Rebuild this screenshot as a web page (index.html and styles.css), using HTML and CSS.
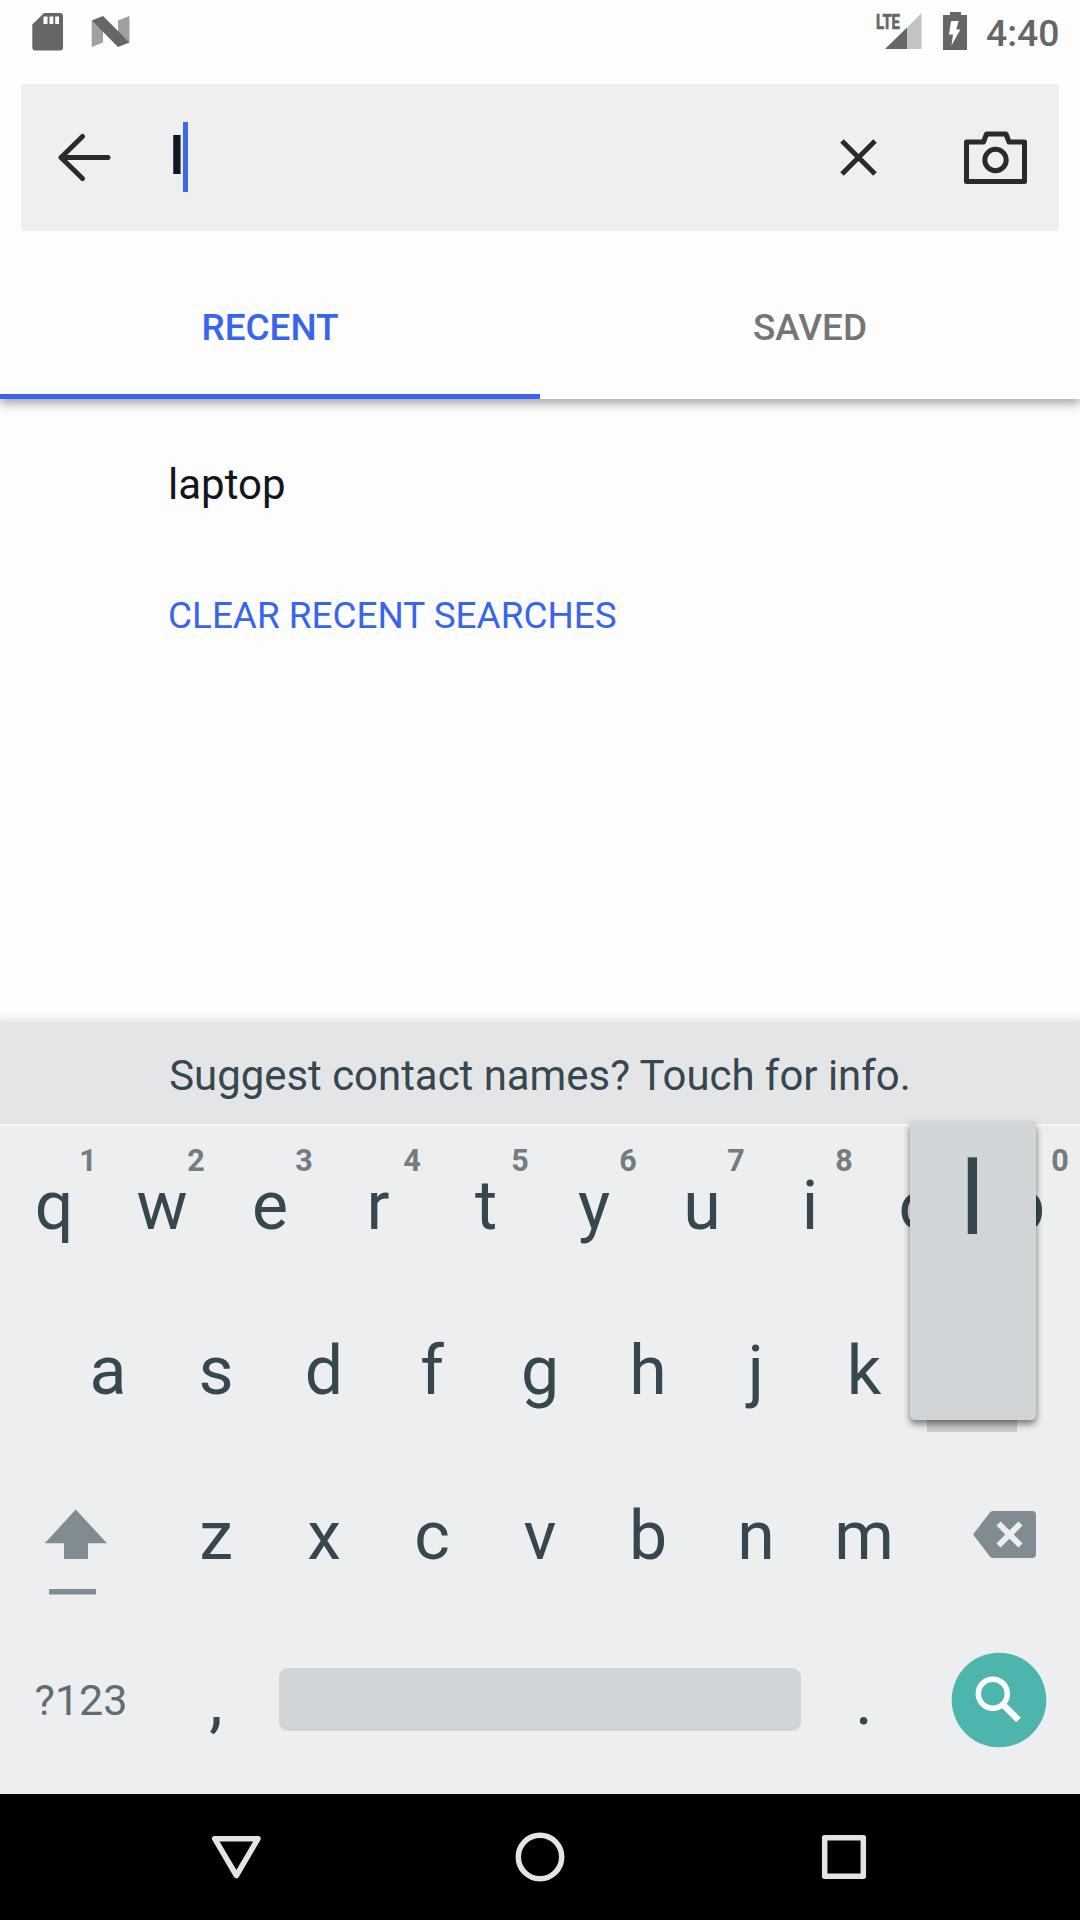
FILE: index.html
```html
<!DOCTYPE html>
<html lang="en">
<head>
<meta charset="utf-8">
<title>Search</title>
<link rel="stylesheet" href="styles.css">
</head>
<body>
<div class="screen">
  <header class="status">
    <svg class="status-left" viewBox="0 0 150 60" width="150" height="60">
      <path fill="#666" d="M44 13H60a3 3 0 0 1 3 3V47.500a3 3 0 0 1-3 3H35.300a3 3 0 0 1-3-3V24.500Z"/>
      <path fill="#fff" d="M43.500 16.500h4v7.500h-4zM49.500 16.500h3.800v7.500h-3.800zM55.200 16.500h3.800v7.500h-3.800z"/>
      <path fill="#a0a0a0" d="M91.700 20.500 103 31V42.500L91.700 47ZM118 20.500 129.500 16V42.500L118 32Z"/>
      <path fill="#666" d="M91.700 20.500 103 16 129.500 42.500 118 47Z"/>
    </svg>
    <svg class="status-right" viewBox="860 0 120 60" width="120" height="60">
      <text class="lte" x="876" y="29" textLength="24" lengthAdjust="spacingAndGlyphs">LTE</text>
      <path fill="#c3c3c3" d="M907 27.500 921.500 13V49H907Z"/>
      <path fill="#666" d="M885 49 907 27.500V49Z"/>
      <path fill="#666" d="M950 12h11v3h6v35h-24V15h7z"/>
      <path fill="#fff" d="M951 21h7.500l-2.200 8.500h4L951.500 45.500l1.500-11h-4z"/>
    </svg>
    <span class="clock">4:40</span>
  </header>

  <div class="searchbar">
    <svg viewBox="21 84 150 147" width="150" height="147" fill="none" stroke="#2a2a2a" stroke-width="5" stroke-linecap="round" stroke-linejoin="round">
      <path d="M108 157.500H61M82.500 136.500 61 157.500 82.500 178.500"/>
    </svg>
    <span class="query">l</span><span class="caret"></span>
    <svg class="search-actions" viewBox="820 84 239 147" width="239" height="147" fill="none" stroke="#2a2a2a" stroke-width="5">
      <path d="M842 141 875 174M875 141 842 174"/>
      <path stroke-linejoin="round" d="M966.500 142H983.500L986.500 134H1006L1009 142H1024.500V181.500H966.500Z"/>
      <circle cx="995.500" cy="160" r="10.700"/>
    </svg>
  </div>

  <nav class="tabs">
    <span class="tab active">RECENT</span>
    <span class="tab">SAVED</span>
  </nav>

  <main class="results">
    <div class="recent">laptop</div>
    <div class="clear">CLEAR RECENT SEARCHES</div>
  </main>

  <section class="keyboard">
    <div class="suggest">Suggest contact names? Touch for info.</div>
    <div class="row">
      <span class="key">q<b class="hint">1</b></span>
      <span class="key">w<b class="hint">2</b></span>
      <span class="key">e<b class="hint">3</b></span>
      <span class="key">r<b class="hint">4</b></span>
      <span class="key">t<b class="hint">5</b></span>
      <span class="key">y<b class="hint">6</b></span>
      <span class="key">u<b class="hint">7</b></span>
      <span class="key">i<b class="hint">8</b></span>
      <span class="key">o</span>
      <span class="key">p<b class="hint">0</b></span>
    </div>
    <div class="row">
      <span class="key">a</span><span class="key">s</span><span class="key">d</span><span class="key">f</span><span class="key">g</span><span class="key">h</span><span class="key">j</span><span class="key">k</span>
      <span class="key pressed"><span class="popup">l</span></span>
    </div>
    <div class="row">
      <svg viewBox="0 1456 162 165" width="162" height="165" fill="#808c91">
        <path d="M75.700 1509.500 107 1543.300H88V1559H64V1543.300H44.800Z"/>
        <path d="M49 1589h47v5.500H49z"/>
      </svg>
      <span class="key">z</span><span class="key">x</span><span class="key">c</span><span class="key">v</span><span class="key">b</span><span class="key">n</span><span class="key">m</span>
      <svg viewBox="918 1456 162 165" width="162" height="165">
        <path fill="#808c91" d="M993 1511h39a4 4 0 0 1 4 4v39a4 4 0 0 1-4 4h-39q-2 0-3.500-2L973 1534.500 989.500 1513q1.500-2 3.500-2z"/>
        <path fill="none" stroke="#eceeef" stroke-width="6" d="M998.500 1523.500 1020.500 1545.500M1020.500 1523.500 998.500 1545.500"/>
      </svg>
    </div>
    <div class="row">
      <span class="key symbols">?123</span>
      <span class="key">,</span>
      <span class="space"></span>
      <span class="key">.</span>
      <svg viewBox="918 1621 162 165" width="162" height="165">
        <circle cx="999" cy="1700" r="47.300" fill="#4db5ac"/>
        <circle cx="992.800" cy="1693.700" r="14.500" fill="none" stroke="#fff" stroke-width="5.500"/>
        <path fill="none" stroke="#fff" stroke-width="6.500" d="M1003 1704.500 1018.500 1720"/>
      </svg>
    </div>
  </section>

  <footer class="navbar">
    <svg viewBox="0 1794 1080 126" width="1080" height="126" fill="none" stroke="#e4e4e4" stroke-width="5.500" stroke-linejoin="round">
      <path d="M214.700 1838.700H258L236.400 1875.500Z"/>
      <circle cx="540" cy="1857" r="21.700"/>
      <path d="M824.700 1837.700H863.300V1876.300H824.700Z"/>
    </svg>
  </footer>
</div>
</body>
</html>
```
FILE: styles.css
```css
* { box-sizing: border-box; }
body { margin: 0; background: #fdfdfd; font-family: Roboto, "Noto Sans", sans-serif; }
svg { display: block; flex: none; }
.screen { width: 1080px; height: 1920px; display: flex; flex-direction: column; overflow: hidden; background: #fdfdfd; }

.status { height: 84px; display: flex; align-items: flex-start; }
.status-right { margin-left: auto; }
.lte { font: 700 21px Roboto, sans-serif; fill: #666; stroke: #666; stroke-width: .7px; }
.clock { width: 100px; padding-left: 6px; font-size: 37.300px; font-weight: 500; line-height: 67px; color: #666; }

.searchbar { height: 147px; margin: 0 21px; display: flex; background: #efefef; border-radius: 4px; }
.query { width: 12px; font-size: 52px; font-weight: 700; line-height: 146px; color: #101622; text-indent: -1px; }
.caret { width: 5px; height: 70px; margin-top: 38px; background: #3f68e8; }
.search-actions { margin-left: auto; }

.tabs { height: 168px; display: flex; box-shadow: 0 5px 9px rgba(0,0,0,.32); clip-path: inset(0 0 -20px 0); }
.tab { flex: 1; height: 168px; padding-top: 31px; text-align: center; font-size: 36.900px; font-weight: 500; line-height: 131px; color: #757575; }
.tab.active { color: #3864ee; border-bottom: 5px solid #3864ee; }

.results { flex: 1; padding: 35px 0 0 168px; }
.recent { height: 131px; font-size: 42px; line-height: 101px; color: #10151f; }
.clear { font-size: 36.900px; line-height: 101px; color: #3864ee; }

.keyboard { height: 772px; background: #eceeef; box-shadow: 0 -2px 8px 3px rgba(0,0,0,.08); }
.suggest { height: 104px; background: #e4e5e7; border-bottom: 2px solid #f6f7f8; text-align: center; font-size: 41.900px; line-height: 107px; color: #37474f; }
.row { height: 165px; display: flex; justify-content: center; }
.key { position: relative; width: 108px; height: 165px; text-align: center; font-size: 68px; line-height: 161px; color: #37474f; }
.hint { position: absolute; left: 68px; top: 15px; width: 40px; font-size: 30.500px; line-height: 40px; color: #737d80; }
.symbols { width: 162px; font-size: 43px; line-height: 159px; color: #5f6d72; }
.space { width: 522px; height: 63px; margin: 47px 9px 0; border-radius: 9px; background: #d1d5d8; }
.pressed { height: 141px; background: linear-gradient(#cccccd, #cccccd) center / 90px 100% no-repeat; }
.popup { position: absolute; left: -8px; top: -170px; width: 126px; height: 299px; border-radius: 5px; background: #d1d5d8; box-shadow: 0 4px 7px rgba(0,0,0,.5); font-size: 102px; line-height: 156px; text-indent: -1px; }

.navbar { height: 126px; background: #000; }
```
